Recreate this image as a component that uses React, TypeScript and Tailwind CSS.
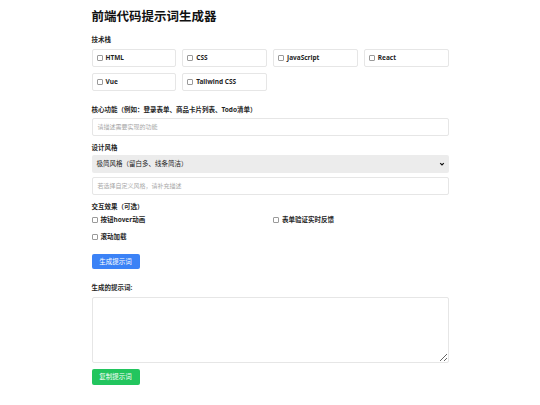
import React from "react";

const Box = () => (
  <span className="inline-block w-[6px] h-[6px] border border-[#9a9a9a] rounded-[1px] bg-white shrink-0" />
);

export default function App() {
  const techs = ["HTML", "CSS", "JavaScript", "React", "Vue", "Tailwind CSS"];
  return (
    <div
      className="min-h-[405px] bg-white text-[#1f1f1f]"
      style={{ fontFamily: '"Noto Sans", "Noto Sans CJK SC", sans-serif' }}
    >
      <div className="w-[357px] mx-auto pt-[9px] flex flex-col">
        <h1 className="h-[16px] leading-[16px] text-[12.5px] font-bold text-[#111]">前端代码提示词生成器</h1>

        <div className="mt-[10px] h-[10px] leading-[10px] text-[6.5px] font-bold">技术栈</div>
        <div className="mt-[4px] grid grid-cols-4 gap-x-[6px] gap-y-[6px]">
          {techs.map((t) => (
            <div
              key={t}
              className="h-[18px] border border-[#e6e6e6] rounded-[2px] flex items-center gap-[3px] pl-[4px] text-[6.5px] font-bold"
            >
              <Box />
              <span>{t}</span>
            </div>
          ))}
        </div>

        <div className="mt-[14px] h-[10px] leading-[10px] text-[6.5px] font-bold">核心功能（例如：登录表单、商品卡片列表、Todo清单）</div>
        <div className="mt-[3px] h-[18px] border border-[#e6e6e6] rounded-[2px] flex items-center pl-[5px] text-[6px] text-[#a8a8a8]">
          请描述需要实现的功能
        </div>

        <div className="mt-[7px] h-[10px] leading-[10px] text-[6.5px] font-bold">设计风格</div>
        <div className="mt-[2px] h-[18px] bg-[#ececec] rounded-[2px] flex items-center justify-between pl-[5px] pr-[4px] text-[6.5px] text-[#222]">
          <span>极简风格（留白多、线条简洁）</span>
          <svg width="6" height="6" viewBox="0 0 10 10">
            <path d="M2 3.5 L5 6.5 L8 3.5" fill="none" stroke="#111" strokeWidth="2" />
          </svg>
        </div>
        <div className="mt-[4px] h-[18px] border border-[#e6e6e6] rounded-[2px] flex items-center pl-[5px] text-[6px] text-[#a8a8a8]">
          若选择自定义风格，请补充描述
        </div>

        <div className="mt-[7px] h-[10px] leading-[10px] text-[6.5px] font-bold">交互效果（可选）</div>
        <div className="mt-[3px] grid grid-cols-2 gap-x-[6px] gap-y-[7px]">
          {["按钮hover动画", "表单验证实时反馈", "滚动加载"].map((t) => (
            <div key={t} className="h-[10px] flex items-center gap-[3px] text-[6.5px] font-bold">
              <Box />
              <span>{t}</span>
            </div>
          ))}
        </div>

        <div className="mt-[12px]">
          <button className="h-[15px] w-[48px] bg-[#3b82f6] text-white text-[6.5px] rounded-[2px] flex items-center justify-center">
            生成提示词
          </button>
        </div>

        <div className="mt-[14px] h-[10px] leading-[10px] text-[6.5px] font-bold">生成的提示词:</div>
        <textarea
          readOnly
          className="mt-[4px] h-[66px] w-full border border-[#e6e6e6] rounded-[2px] outline-none"
        />

        <div className="mt-[6px]">
          <button className="h-[16px] w-[48px] bg-[#22c55e] text-white text-[6.5px] rounded-[2px] flex items-center justify-center">
            复制提示词
          </button>
        </div>
      </div>
    </div>
  );
}
